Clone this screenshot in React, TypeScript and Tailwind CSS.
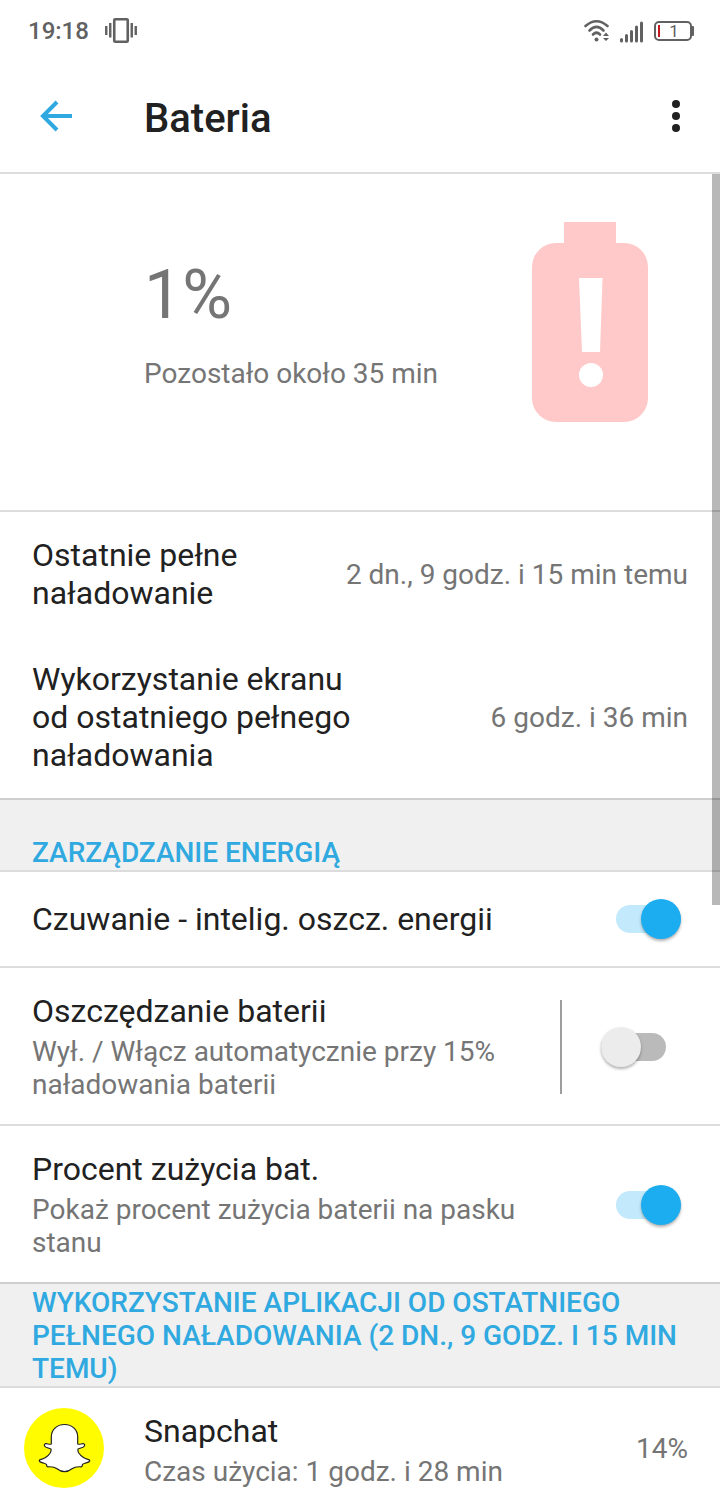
import { useState } from "react";
import type { ReactNode } from "react";

function VibrateIcon() {
  return (
    <svg width="32" height="28" viewBox="0 0 32 28" fill="none" stroke="#616161" aria-hidden="true">
      <rect x="9.25" y="2.25" width="13.500" height="22.500" rx="1" strokeWidth="2.600" />
      <path d="M1.250 9v9M30.750 9v9M5.250 6v14.500M26.750 6v14.500" strokeWidth="2.400" />
    </svg>
  );
}

function WifiIcon() {
  return (
    <svg width="26" height="24" viewBox="0 0 26 24" fill="none" stroke="#616161" strokeLinecap="round" aria-hidden="true">
      <path d="M1.500 7Q12.500 -2.500 23.500 7" strokeWidth="2.600" />
      <path d="M5.500 11.500Q12.500 4.500 19.500 11.500" strokeWidth="2.600" />
      <path d="M9 15.500Q12.500 12 16 15.500" strokeWidth="2.600" />
      <circle cx="12.500" cy="20.500" r="2" fill="#616161" stroke="none" />
      <path d="M22 13.500l3 3.500h-6zM22 22l3-3h-6z" fill="#616161" stroke="none" />
    </svg>
  );
}

function SignalIcon() {
  return (
    <svg width="24" height="24" viewBox="0 0 24 24" stroke="#616161" strokeWidth="3" strokeLinecap="round" aria-hidden="true">
      <path d="M1.500 20.500v1.500M6.500 16.500v5.500M11.500 12.500v9.500M16.500 8v14M21.500 4v18" />
    </svg>
  );
}

function BatteryIcon() {
  return (
    <svg width="40" height="20" viewBox="0 0 40 20" aria-hidden="true">
      <rect x="1" y="1" width="36" height="18" rx="4" fill="none" stroke="#616161" strokeWidth="2" />
      <path d="M38 5h1a1 1 0 0 1 1 1v8a1 1 0 0 1-1 1h-1z" fill="#616161" />
      <path d="M4 4h2v12h-2z" fill="#c4161c" />
      <text x="20" y="16" textAnchor="middle" fontSize="17" fill="#616161">
        1
      </text>
    </svg>
  );
}

function LowBattery() {
  return (
    <svg width="116" height="200" viewBox="0 0 116 200" className="mr-10 shrink-0" aria-hidden="true">
      <path
        d="M32 0h52v21h8a24 24 0 0 1 24 24v131a24 24 0 0 1-24 24H24a24 24 0 0 1-24-24V45a24 24 0 0 1 24-24h8z"
        fill="#ffc9c9"
      />
      <path d="M47 56h23.500l-2.500 74H50z" fill="#fff" />
      <circle cx="59" cy="153" r="12" fill="#fff" />
    </svg>
  );
}

function GhostIcon() {
  return (
    <svg width="80" height="80" viewBox="0 0 80 80" className="shrink-0" aria-hidden="true">
      <circle cx="40" cy="40" r="40" fill="#fffc00" />
      <path
        d="M40.500 16.500c-8 0-13.200 5.500-13.200 12.500v7c-2 1-4-.800-6-.300-1.800.600-1 2.800.700 3.500l5 1.800c.800 3-2.500 6.500-5.500 8.500-2.500 1.700-4.500 1.800-6 2.500-.800 1 .500 2 2.500 2.600 3 1 4 1 4.500 2 .300 1 0 2.200 1.500 2.200 4-.300 6.500 0 9 2 2.500 2 4.500 2.900 7.500 2.900s5-.900 7.500-2.900c2.500-2 5-2.300 9-2 1.500 0 1.200-1.200 1.500-2.200.500-1 1.500-1 4.500-2 2-.600 3.300-1.600 2.500-2.600-1.500-.700-3.500-.800-6-2.500-3-2-6.300-5.500-5.500-8.500l5-1.800c1.700-.700 2.500-2.900.700-3.500-2-.500-4 1.300-6 .300v-7c0-7-5.200-12.500-13.200-12.500z"
        fill="#fff"
        stroke="#222"
        strokeWidth="1.200"
        strokeLinejoin="round"
      />
    </svg>
  );
}

type ToggleProps = { id: string; checked: boolean; onChange: () => void };

function Toggle({ id, checked, onChange }: ToggleProps) {
  return (
    <span className="relative flex h-10 w-[65px] shrink-0 items-center">
      <input
        id={id}
        type="checkbox"
        role="switch"
        checked={checked}
        onChange={onChange}
        className="peer absolute inset-0 z-10 h-full w-full cursor-pointer opacity-0"
      />
      <span className="h-7 w-full rounded-full bg-[#bababa] peer-checked:bg-[#c2eafc]" />
      <span className="absolute left-0 size-10 rounded-full bg-[#ececec] shadow-[0_2px_3px_rgba(0,0,0,0.3)] peer-checked:right-0 peer-checked:left-auto peer-checked:bg-[#1cacf0]" />
    </span>
  );
}

function InfoRow({ label, value }: { label: string; value: string }) {
  return (
    <div className="flex items-center justify-between gap-8 px-8 py-6">
      <dt className="max-w-80 text-[32px] leading-[38px]">{label}</dt>
      <dd className="shrink-0 text-[28px] leading-[33px] text-[#757575]">{value}</dd>
    </div>
  );
}

function SectionTitle({ children, spaced }: { children: ReactNode; spaced?: boolean }) {
  return (
    <h2
      className={`border-y-2 border-t-[#cfcfcf] border-b-[#dcdcdc] bg-[#f0f0f0] px-8 pb-px text-[28px] leading-[33px] font-medium text-[#2fa9e0] uppercase ${
        spaced ? "pt-9" : "pt-0.5"
      }`}
    >
      {children}
    </h2>
  );
}

export default function App() {
  const [standby, setStandby] = useState(true);
  const [saver, setSaver] = useState(false);
  const [percent, setPercent] = useState(true);

  return (
    <div className="bg-white font-['Roboto',sans-serif] text-[#212121]">
      {/* Status bar */}
      <div className="flex h-15 items-center justify-between pt-0.5 pr-[26px] pl-7 text-[#616161]">
        <div className="flex items-center gap-4">
          <span className="text-[24px] leading-7 font-medium">19:18</span>
          <VibrateIcon />
        </div>
        <div className="flex items-center gap-2.5">
          <WifiIcon />
          <SignalIcon />
          <BatteryIcon />
        </div>
      </div>

      {/* App bar */}
      <header className="flex h-[114px] items-center border-b-2 border-[#dcdcdc] pr-5 pl-10">
        <button type="button" aria-label="Wstecz" className="mr-[72px] cursor-pointer">
          <svg width="32" height="32" viewBox="0 0 32 32" fill="none" stroke="#2fa9e0" strokeWidth="4">
            <path d="M17 2L3 16l14 14M3 16h29" />
          </svg>
        </button>
        <h1 className="flex-1 pt-1.5 text-[40px] leading-12 font-medium">Bateria</h1>
        <button type="button" aria-label="Więcej opcji" className="flex w-12 cursor-pointer justify-center">
          <svg width="8" height="32" viewBox="0 0 8 32" fill="#212121">
            <circle cx="4" cy="4" r="4" />
            <circle cx="4" cy="16" r="4" />
            <circle cx="4" cy="28" r="4" />
          </svg>
        </button>
      </header>

      <main className="relative">
        {/* Scroll indicator */}
        <div className="absolute top-0 right-0 h-[731px] w-2 bg-black/28" />

        <section className="flex items-start justify-between border-b-2 border-[#dcdcdc] pt-12 pr-8 pb-22 pl-36">
          <div className="pt-[34px]">
            <p className="text-[68px] leading-[78px] text-[#757575]">1%</p>
            <p className="pt-[23px] text-[28px] leading-[33px] text-[#757575]">Pozostało około 35 min</p>
          </div>
          <LowBattery />
        </section>

        <dl>
          <InfoRow label="Ostatnie pełne naładowanie" value="2 dn., 9 godz. i 15 min temu" />
          <InfoRow label="Wykorzystanie ekranu od ostatniego pełnego naładowania" value="6 godz. i 36 min" />
        </dl>

        <SectionTitle spaced>Zarządzanie energią</SectionTitle>

        <div className="flex h-24 items-center justify-between border-b-2 border-[#dcdcdc] pr-[39px] pl-8">
          <label htmlFor="standby" className="text-[32px] leading-[38px]">
            Czuwanie - intelig. oszcz. energii
          </label>
          <Toggle id="standby" checked={standby} onChange={() => setStandby(!standby)} />
        </div>

        <div className="flex items-center border-b-2 border-[#dcdcdc] pt-6 pr-[54px] pb-[23px] pl-8">
          <label htmlFor="saver" className="flex flex-1 flex-col gap-[5px]">
            <span className="text-[32px] leading-[38px]">Oszczędzanie baterii</span>
            <span className="max-w-[490px] text-[28px] leading-[33px] text-[#757575]">
              Wył. / Włącz automatycznie przy 15% naładowania baterii
            </span>
          </label>
          <div className="mr-[39px] h-[94px] w-0.5 bg-[#9e9e9e]" />
          <Toggle id="saver" checked={saver} onChange={() => setSaver(!saver)} />
        </div>

        <div className="flex items-center justify-between pt-6 pr-[39px] pb-[23px] pl-8">
          <label htmlFor="percent" className="flex flex-col gap-[5px]">
            <span className="text-[32px] leading-[38px]">Procent zużycia bat.</span>
            <span className="max-w-[490px] text-[28px] leading-[33px] text-[#757575]">
              Pokaż procent zużycia baterii na pasku stanu
            </span>
          </label>
          <Toggle id="percent" checked={percent} onChange={() => setPercent(!percent)} />
        </div>

        <SectionTitle>Wykorzystanie aplikacji od ostatniego pełnego naładowania (2 dn., 9 godz. i 15 min temu)</SectionTitle>

        <div className="flex items-center gap-10 pt-5 pr-8 pb-3 pl-6">
          <GhostIcon />
          <div className="flex flex-1 flex-col gap-[5px] pt-1">
            <h3 className="text-[32px] leading-[38px]">Snapchat</h3>
            <p className="text-[28px] leading-[33px] text-[#757575]">Czas użycia: 1 godz. i 28 min</p>
          </div>
          <span className="text-[28px] leading-[33px] text-[#757575]">14%</span>
        </div>
      </main>
    </div>
  );
}
